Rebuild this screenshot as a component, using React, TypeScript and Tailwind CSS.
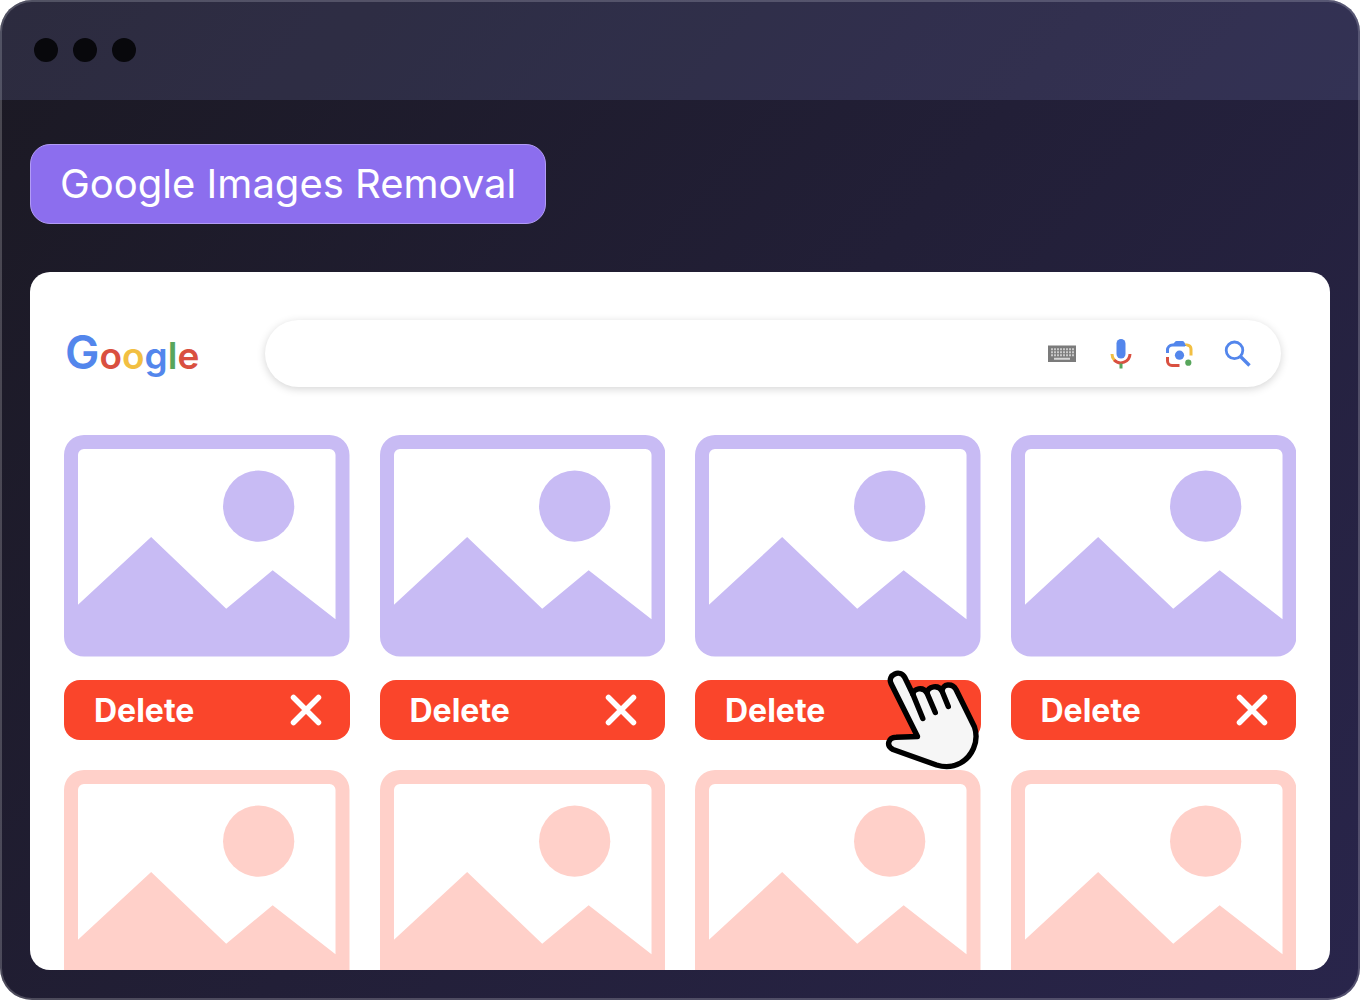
import { useState } from 'react'

const LOGO_LETTERS = [
  { char: 'G', className: 'text-[46px] text-[#5386ec]' },
  { char: 'o', className: 'text-[#d95040]' },
  { char: 'o', className: 'text-[#f2bf42]' },
  { char: 'g', className: 'text-[#5386ec]' },
  { char: 'l', className: 'text-[#58a65c]' },
  { char: 'e', className: 'text-[#d95040]' },
]

const RESULTS = [1, 2, 3, 4]

function Logo() {
  return (
    <a href="#" aria-label="Google" className="w-50 shrink-0 text-[37px] leading-12 font-semibold">
      {LOGO_LETTERS.map((l, i) => (
        <span key={i} className={l.className}>{l.char}</span>
      ))}
    </a>
  )
}

function KeyboardIcon() {
  return (
    <svg className="size-8" viewBox="0 0 32 32" fill="none">
      <rect x="1" y="7.500" width="28" height="16.500" fill="#7b7b7b" />
      <path d="M4 11.300h23M4 14.300h23M4 17.300h23" stroke="#c9c9c9" strokeWidth="2" strokeDasharray="2 1" />
      <path d="M7 20.700h16" stroke="#d6d6d6" strokeWidth="2" />
    </svg>
  )
}

function MicIcon() {
  return (
    <svg className="size-8" viewBox="0 0 32 32" fill="none">
      <rect x="11.500" y="1" width="9" height="19.500" rx="4.500" fill="#5386ec" />
      <path d="M7 16a9 9 0 0 0 2.600 6.400" stroke="#f2bf42" strokeWidth="3" />
      <path d="M9.200 22a9.200 9.200 0 0 0 15.800-6" stroke="#d95040" strokeWidth="3" />
      <path d="M16 25.500v5" stroke="#58a65c" strokeWidth="3" />
    </svg>
  )
}

function LensIcon() {
  return (
    <svg className="size-8" viewBox="0 0 32 32" fill="none">
      <path d="M4.500 15v-3a5 5 0 0 1 5-5H22" stroke="#5386ec" strokeWidth="3" />
      <path d="M9.500 7l2.500-3.200q.6-.8 1.600-.8h5.800q1 0 1.600.8L23.500 8H9.500z" fill="#5386ec" />
      <path d="M21.500 5.500h2.500a5.500 5.500 0 0 1 5.500 5.500V17.500h-3v-6a3 3 0 0 0-2.800-3z" fill="#f2bf42" />
      <path d="M4.500 19v4a4.500 4.500 0 0 0 4.500 4.500H16.500" stroke="#d95040" strokeWidth="3" />
      <circle cx="16.500" cy="17.200" r="4.600" fill="#5386ec" />
      <circle cx="25.300" cy="24.700" r="3.100" fill="#58a65c" />
    </svg>
  )
}

function SearchIcon() {
  return (
    <svg className="size-8" viewBox="0 0 32 32" fill="none" stroke="#5386ec">
      <circle cx="13.500" cy="12.300" r="8.300" strokeWidth="2.800" />
      <path d="M19 18l9.500 9.500" strokeWidth="3.400" />
    </svg>
  )
}

function SearchBar() {
  const [query, setQuery] = useState('')

  return (
    <form
      onSubmit={e => e.preventDefault()}
      className="flex h-[67px] flex-1 items-center gap-[26px] rounded-full bg-white pr-7 pl-8 shadow-[0_2px_8px_rgba(0,0,0,0.17)]"
    >
      <input
        type="text"
        aria-label="Search"
        value={query}
        onChange={e => setQuery(e.target.value)}
        className="min-w-0 flex-1 bg-transparent text-2xl text-gray-800 outline-none"
      />
      <button type="button" aria-label="Keyboard"><KeyboardIcon /></button>
      <button type="button" aria-label="Voice search"><MicIcon /></button>
      <button type="button" aria-label="Search by image"><LensIcon /></button>
      <button type="submit" aria-label="Submit"><SearchIcon /></button>
    </form>
  )
}

function Placeholder({ className }: { className: string }) {
  return (
    <svg className={`block w-full ${className}`} viewBox="0 0 286 222" fill="currentColor">
      <path
        fillRule="evenodd"
        d="M20 0H266a20 20 0 0 1 20 20V202a20 20 0 0 1-20 20H20a20 20 0 0 1-20-20V20A20 20 0 0 1 20 0zM20 14a6 6 0 0 0-6 6V170L87.300 102.300 162.500 174 209 135.500 272 184.500V20a6 6 0 0 0-6-6z"
      />
      <circle cx="195" cy="71.300" r="35.700" />
    </svg>
  )
}

function HandCursor() {
  return (
    <svg
      className="pointer-events-none absolute -top-2.5 right-0 h-[100px] w-24"
      viewBox="16 10 96 100"
      fill="#f6f6f6"
      stroke="#000"
      strokeWidth="5.400"
      strokeLinecap="round"
      strokeLinejoin="round"
    >
      <path d="M48.500 76.500L22 23.500C18 14.500 31.500 9 35.800 17.500L44 34.500C44 28.500 54 26 58 33C59 26 69.500 24.500 73 31C73.500 24 83 22.500 87 29.500L105.500 67C110.500 82 102.500 97 91.500 103C84 107.200 75.500 107.500 67.500 105L24 89.500C16.500 86 19.500 77.200 27 77.200Z" />
      <path d="M44 34.500L53.800 58.500M58 33L66.300 52.500M73 31L79.300 46.500" fill="none" />
    </svg>
  )
}

function DeleteButton() {
  return (
    <button
      type="button"
      className="flex h-15 w-full items-center justify-between rounded-2xl bg-[#fa452b] px-7 text-[32px] leading-none font-bold text-white"
    >
      <span className="pt-0.5 pl-0.5">Delete</span>
      <svg className="size-8" viewBox="0 0 32 32" fill="none" stroke="currentColor" strokeWidth="5.500" strokeLinecap="round">
        <path d="M3.500 3.500l25 25M28.500 3.500l-25 25" />
      </svg>
    </button>
  )
}

export default function App() {
  return (
    <div className="flex h-screen flex-col overflow-hidden rounded-[32px] bg-linear-[130deg,#1b1923,#29254b] font-[Inter,sans-serif] inset-ring-2 inset-ring-white/20">
      {/* Title bar */}
      <div className="flex h-25 shrink-0 items-center gap-[15px] bg-[#8486cc]/17 px-[34px]">
        <span className="size-6 rounded-full bg-[#08080c]" />
        <span className="size-6 rounded-full bg-[#08080c]" />
        <span className="size-6 rounded-full bg-[#08080c]" />
      </div>

      <main className="flex min-h-0 flex-1 flex-col items-start gap-12 px-[30px] pt-11 pb-[30px]">
        <h1 className="flex h-20 shrink-0 items-center rounded-[20px] border border-[#b29cf5] bg-[#8c6eee] px-[29px] text-[40px] leading-none font-normal text-white">
          Google Images Removal
        </h1>

        <section className="min-h-0 w-full flex-1 overflow-hidden rounded-[20px] bg-white">
          <header className="flex items-center pt-12 pr-[49px] pl-[35px]">
            <Logo />
            <SearchBar />
          </header>

          <div className="grid grid-cols-4 gap-[30px] px-[34px] pt-12">
            {RESULTS.map(n => (
              <div key={n} className="flex flex-col gap-[23px]">
                <Placeholder className="text-[#c8bbf4]" />
                <div className="relative">
                  <DeleteButton />
                  {n === 3 && <HandCursor />}
                </div>
              </div>
            ))}
            {RESULTS.map(n => (
              <Placeholder key={n} className="text-[#ffd0c9]" />
            ))}
          </div>
        </section>
      </main>
    </div>
  )
}
